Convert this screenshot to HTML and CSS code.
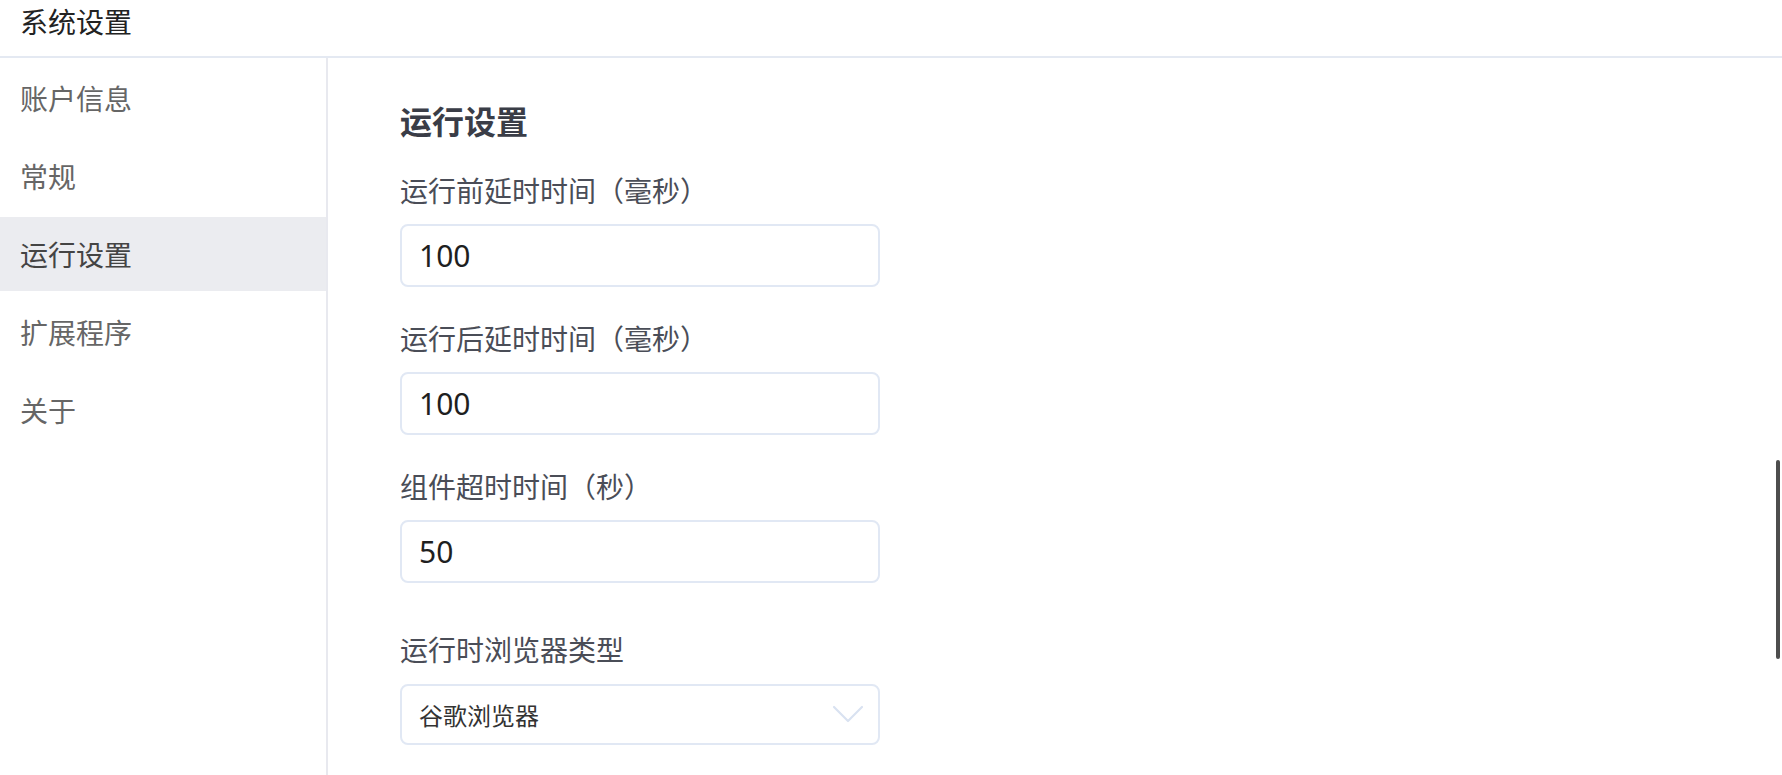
FILE: index.html
```html
<!DOCTYPE html>
<html lang="zh-CN">
<head>
<meta charset="utf-8">
<title>系统设置</title>
<link rel="stylesheet" href="styles.css">
</head>
<body>
<div class="app">
  <header class="topbar">系统设置</header>
  <div class="body">
    <nav class="sidebar">
      <div class="nav-item">账户信息</div>
      <div class="nav-item">常规</div>
      <div class="nav-item active">运行设置</div>
      <div class="nav-item">扩展程序</div>
      <div class="nav-item">关于</div>
    </nav>
    <main class="content">
      <h2 class="section-title">运行设置</h2>
      <div class="field">
        <label class="field-label">运行前延时时间（毫秒）</label>
        <div class="input">100</div>
      </div>
      <div class="field">
        <label class="field-label">运行后延时时间（毫秒）</label>
        <div class="input">100</div>
      </div>
      <div class="field">
        <label class="field-label">组件超时时间（秒）</label>
        <div class="input">50</div>
      </div>
      <div class="field field-select">
        <label class="field-label">运行时浏览器类型</label>
        <div class="select">
          <span class="select-value">谷歌浏览器</span>
          <svg class="chevron" width="32" height="20" viewBox="0 0 32 20"><path d="M2 3 L16 17 L30 3" fill="none" stroke="#d9e2f1" stroke-width="2.2" stroke-linecap="round" stroke-linejoin="round"/></svg>
        </div>
      </div>
    </main>
  </div>
  <div class="scroll-thumb"></div>
</div>
</body>
</html>
```
FILE: styles.css
```css
* { box-sizing: border-box; }
html, body { margin: 0; padding: 0; background: #fff; }
body {
  font-family: "Noto Sans", "Noto Sans CJK SC", sans-serif;
  width: 1782px;
  height: 775px;
  overflow: hidden;
}
.app {
  position: relative;
  height: 775px;
  display: flex;
  flex-direction: column;
}
.topbar {
  height: 58px;
  border-bottom: 2px solid #e4e9f2;
  padding-left: 20px;
  font-size: 28px;
  line-height: 45px;
  color: #222;
  flex: none;
}
.body {
  flex: 1;
  display: flex;
  min-height: 0;
}
.sidebar {
  width: 328px;
  flex: none;
  border-right: 2px solid #e8e9ef;
  padding-top: 3px;
  display: flex;
  flex-direction: column;
  gap: 4px;
}
.nav-item {
  height: 74px;
  display: flex;
  align-items: center;
  padding-left: 20px;
  font-size: 28px;
  color: #666;
}
.nav-item.active {
  background: #ebecf0;
  color: #444;
}
.content {
  flex: 1;
  padding: 42px 0 0 72px;
}
.section-title {
  margin: 0 0 27px;
  font-size: 32px;
  line-height: 44px;
  font-weight: 700;
  color: #3a3d47;
}
.field {
  display: flex;
  flex-direction: column;
  margin-bottom: 32px;
}
.field-label {
  font-size: 28px;
  line-height: 40px;
  color: #4a4d57;
  margin-bottom: 13px;
}
.input {
  width: 480px;
  height: 63px;
  border: 2px solid #e1e8f4;
  border-radius: 8px;
  padding-left: 17px;
  display: flex;
  align-items: center;
  font-size: 30px;
  color: #1f1f1f;
}
.field-select { padding-top: 15px; }
.field-select .field-label { margin-bottom: 14px; }
.select {
  width: 480px;
  height: 61px;
  border: 2px solid #e1e8f4;
  border-radius: 8px;
  padding: 0 14px 0 17px;
  display: flex;
  align-items: center;
  justify-content: space-between;
}
.select-value {
  font-size: 24px;
  color: #333;
}
.chevron { margin-top: -2px; }
.scroll-thumb {
  position: absolute;
  left: 1776px;
  top: 460px;
  width: 4px;
  height: 199px;
  border-radius: 2px;
  background: #4d4d4d;
}
```
